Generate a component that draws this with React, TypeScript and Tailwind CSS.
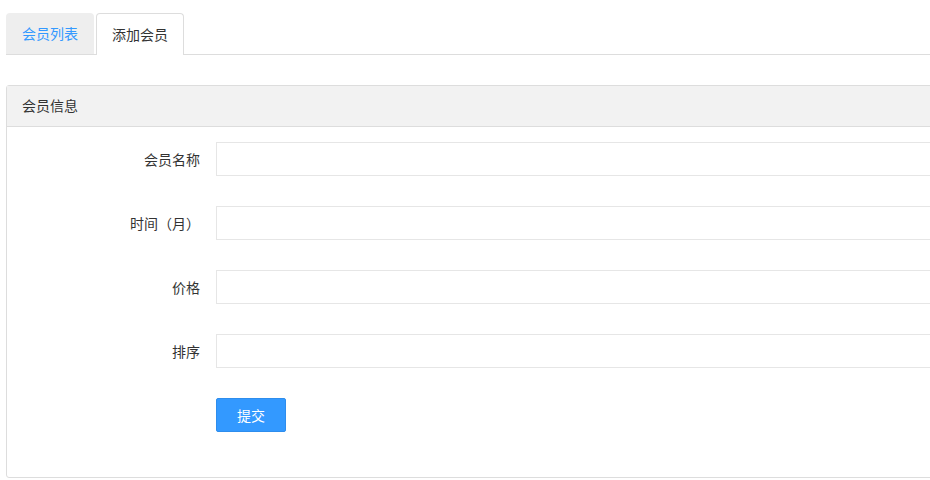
const fields = ["会员名称", "时间（月）", "价格", "排序"];

export default function App() {
  return (
    <div
      className="w-full h-[480px] overflow-hidden bg-white text-[#333]"
      style={{ fontFamily: '"Noto Sans CJK SC", "Noto Sans", sans-serif' }}
    >
      <div className="w-[980px] pl-[6px] pt-[13px]">
        {/* tabs */}
        <div className="flex gap-[2px] border-b border-[#dddddd] h-[42px]">
          <div className="w-[88px] h-[41px] flex items-center justify-center bg-[#eeeeee] rounded-t-[4px] text-[14px] text-[#3399ff]">
            会员列表
          </div>
          <div className="w-[88px] h-[42px] flex items-center justify-center bg-white border border-b-0 border-[#dddddd] rounded-t-[4px] text-[14px] text-[#333]">
            添加会员
          </div>
        </div>

        {/* panel */}
        <div className="mt-[30px] border border-[#dddddd] rounded-[3px] h-[393px]">
          <div className="h-[41px] flex items-center px-[15px] pb-[2px] bg-[#f2f2f2] border-b border-[#dddddd] text-[14px]">
            会员信息
          </div>
          <div className="pt-[15px] flex flex-col gap-[30px]">
            {fields.map((f) => (
              <div key={f} className="flex items-center">
                <label className="w-[193px] text-right text-[14px] text-[#333]">
                  {f}
                </label>
                <div className="ml-[16px] flex-1 h-[34px] border border-[#e6e6e6] bg-white" />
              </div>
            ))}
            <div className="flex">
              <button className="ml-[209px] w-[70px] h-[34px] rounded-[2px] bg-[#3399ff] border border-[#2e8ded] text-white text-[14px]">
                提交
              </button>
            </div>
          </div>
        </div>
      </div>
    </div>
  );
}
